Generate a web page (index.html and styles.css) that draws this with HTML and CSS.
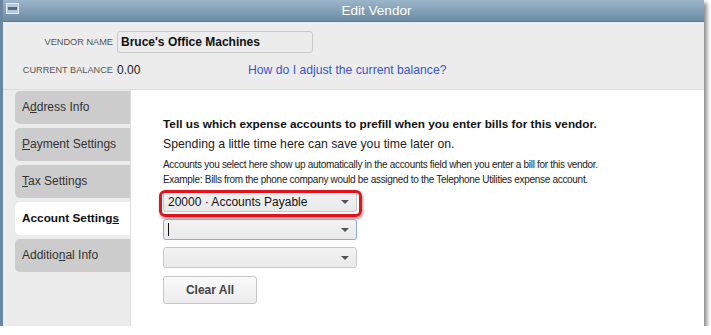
FILE: index.html
```html
<!DOCTYPE html>
<html lang="en">
<head>
    <meta charset="UTF-8">
    <title>Edit Vendor</title>
    <link rel="stylesheet" href="styles.css">
</head>
<body>

    <div class="window">
        <!-- Title bar -->
        <div class="titlebar">
            <svg class="win-icon" width="13" height="11" viewBox="0 0 13 11">
                <rect x="0.5" y="0.5" width="12" height="10" fill="#b8c9d8" stroke="#e4ecf2"/>
                <rect x="2" y="4" width="9" height="3" fill="#4f6a82"/>
            </svg>
            <div class="title">Edit Vendor</div>
        </div>

        <!-- Vendor header -->
        <div class="header">
            <div class="row">
                <span class="label">VENDOR NAME</span>
                <div class="name-box">Bruce's Office Machines</div>
            </div>
            <div class="row">
                <span class="label">CURRENT BALANCE</span>
                <span class="balance">0.00</span>
                <a href="#" class="help-link">How do I adjust the current balance?</a>
            </div>
        </div>

        <div class="main">
            <!-- Tabs -->
            <div class="tabs">
                <div class="tab">A<u>d</u>dress Info</div>
                <div class="tab"><u>P</u>ayment Settings</div>
                <div class="tab"><u>T</u>ax Settings</div>
                <div class="tab active">Account Setting<u>s</u></div>
                <div class="tab">Additio<u>n</u>al Info</div>
            </div>

            <!-- Account settings panel -->
            <div class="panel">
                <p class="lead">Tell us which expense accounts to prefill when you enter bills for this vendor.</p>
                <p class="sub">Spending a little time here can save you time later on.</p>
                <p class="note">Accounts you select here show up automatically in the accounts field when you enter a bill for this vendor.<br>Example: Bills from the phone company would be assigned to the Telephone Utilities expense account.</p>

                <div class="dropdown highlight">
                    <span>20000 · Accounts Payable</span>
                    <span class="arrow"></span>
                </div>
                <div class="dropdown focused">
                    <span class="caret"></span>
                    <span class="arrow"></span>
                </div>
                <div class="dropdown">
                    <span></span>
                    <span class="arrow"></span>
                </div>
                <button class="clear-btn">Clear All</button>
            </div>
        </div>
    </div>

</body>
</html>
```

FILE: styles.css
```css
/* General */
body {
    font-family: 'Liberation Sans', Arial, sans-serif;
    margin: 0;
    padding: 0;
    background-color: #ffffff;
    color: #222;
}

.window {
    width: 701px;
    height: 326px;
    border-left: 3px solid #6a87a2;
    background-color: #ececec;
    box-shadow: 3px 3px 4px rgba(0, 0, 0, 0.45);
    display: flex;
    flex-direction: column;
}

/* Title bar */
.titlebar {
    height: 22px;
    display: flex;
    align-items: center;
    background: linear-gradient(#9bb6ca, #6c8ba4);
    border-bottom: 1px solid #5d7a92;
    box-sizing: border-box;
}

.win-icon {
    margin-left: 3px;
    margin-top: -4px;
}

.title {
    flex-grow: 1;
    text-align: center;
    padding-left: 30px;
    color: #ffffff;
    font-size: 13.5px;
}

/* Header */
.header {
    height: 68px;
    box-sizing: border-box;
    padding-top: 9px;
    border-bottom: 1px solid #dedede;
}

.header .row {
    display: flex;
    align-items: center;
}

.header .row + .row {
    margin-top: 10px;
}

.label {
    width: 110px;
    text-align: right;
    margin-right: 4px;
    font-size: 9.2px;
    color: #555;
}

.name-box {
    width: 191px;
    height: 20px;
    line-height: 20px;
    padding-left: 3px;
    border: 1px solid #c9c9c9;
    border-radius: 3px;
    font-size: 12px;
    font-weight: bold;
    color: #111;
}

.balance {
    font-size: 12px;
    color: #222;
    width: 131px;
}

.help-link {
    font-size: 12.2px;
    color: #3c55c8;
    text-decoration: none;
}

/* Main area */
.main {
    flex-grow: 1;
    display: flex;
}

.tabs {
    width: 115px;
    padding-left: 12px;
    padding-top: 1px;
}

.tab {
    height: 33px;
    line-height: 33px;
    margin-bottom: 4px;
    padding-left: 7px;
    background-color: #cccccc;
    border-radius: 5px 0 0 5px;
    font-size: 12px;
    color: #333;
}

.tab.active {
    background-color: #ffffff;
    font-weight: bold;
    font-size: 11.8px;
    color: #111;
}

.panel {
    flex-grow: 1;
    background-color: #ffffff;
    border-left: 1px solid #dddddd;
    padding: 26px 0 0 32px;
}

.panel p {
    margin: 0;
}

.lead {
    font-size: 11.8px;
    font-weight: bold;
    line-height: 16px;
    color: #111;
}

.sub {
    font-size: 12.25px;
    line-height: 16px;
    margin-top: 4px !important;
    color: #222;
}

.note {
    font-size: 10px;
    letter-spacing: -0.3px;
    line-height: 15px;
    margin-top: 5px !important;
    color: #222;
}

/* Dropdowns */
.dropdown {
    position: relative;
    width: 194px;
    height: 21px;
    box-sizing: border-box;
    display: flex;
    align-items: center;
    justify-content: space-between;
    padding: 0 7px 0 4px;
    margin-bottom: 7px;
    background: linear-gradient(#f3f3f3, #e9e9e9);
    border: 1px solid #c8c8c8;
    border-radius: 3px;
    font-size: 12px;
    color: #111;
}

.dropdown.highlight {
    margin-top: 4px;
}

/* red callout drawn over the first dropdown */
.dropdown.highlight::after {
    content: "";
    position: absolute;
    top: -2px;
    left: -5px;
    right: -6px;
    bottom: -6px;
    border: 3px solid #e3121c;
    border-radius: 6px;
    box-shadow: 1px 2px 3px rgba(0, 0, 0, 0.4);
}

.dropdown.focused {
    border-color: #8ea9d8;
}

.arrow {
    width: 0;
    height: 0;
    border-left: 4px solid transparent;
    border-right: 4px solid transparent;
    border-top: 4px solid #555;
}

.caret {
    width: 1px;
    height: 13px;
    background-color: #111;
}

.clear-btn {
    width: 94px;
    height: 28px;
    margin-top: 1px;
    background: linear-gradient(#fafafa, #ececec);
    border: 1px solid #c6c6c6;
    border-radius: 3px;
    font-family: 'Liberation Sans', Arial, sans-serif;
    font-size: 12px;
    font-weight: bold;
    color: #444;
}
```
